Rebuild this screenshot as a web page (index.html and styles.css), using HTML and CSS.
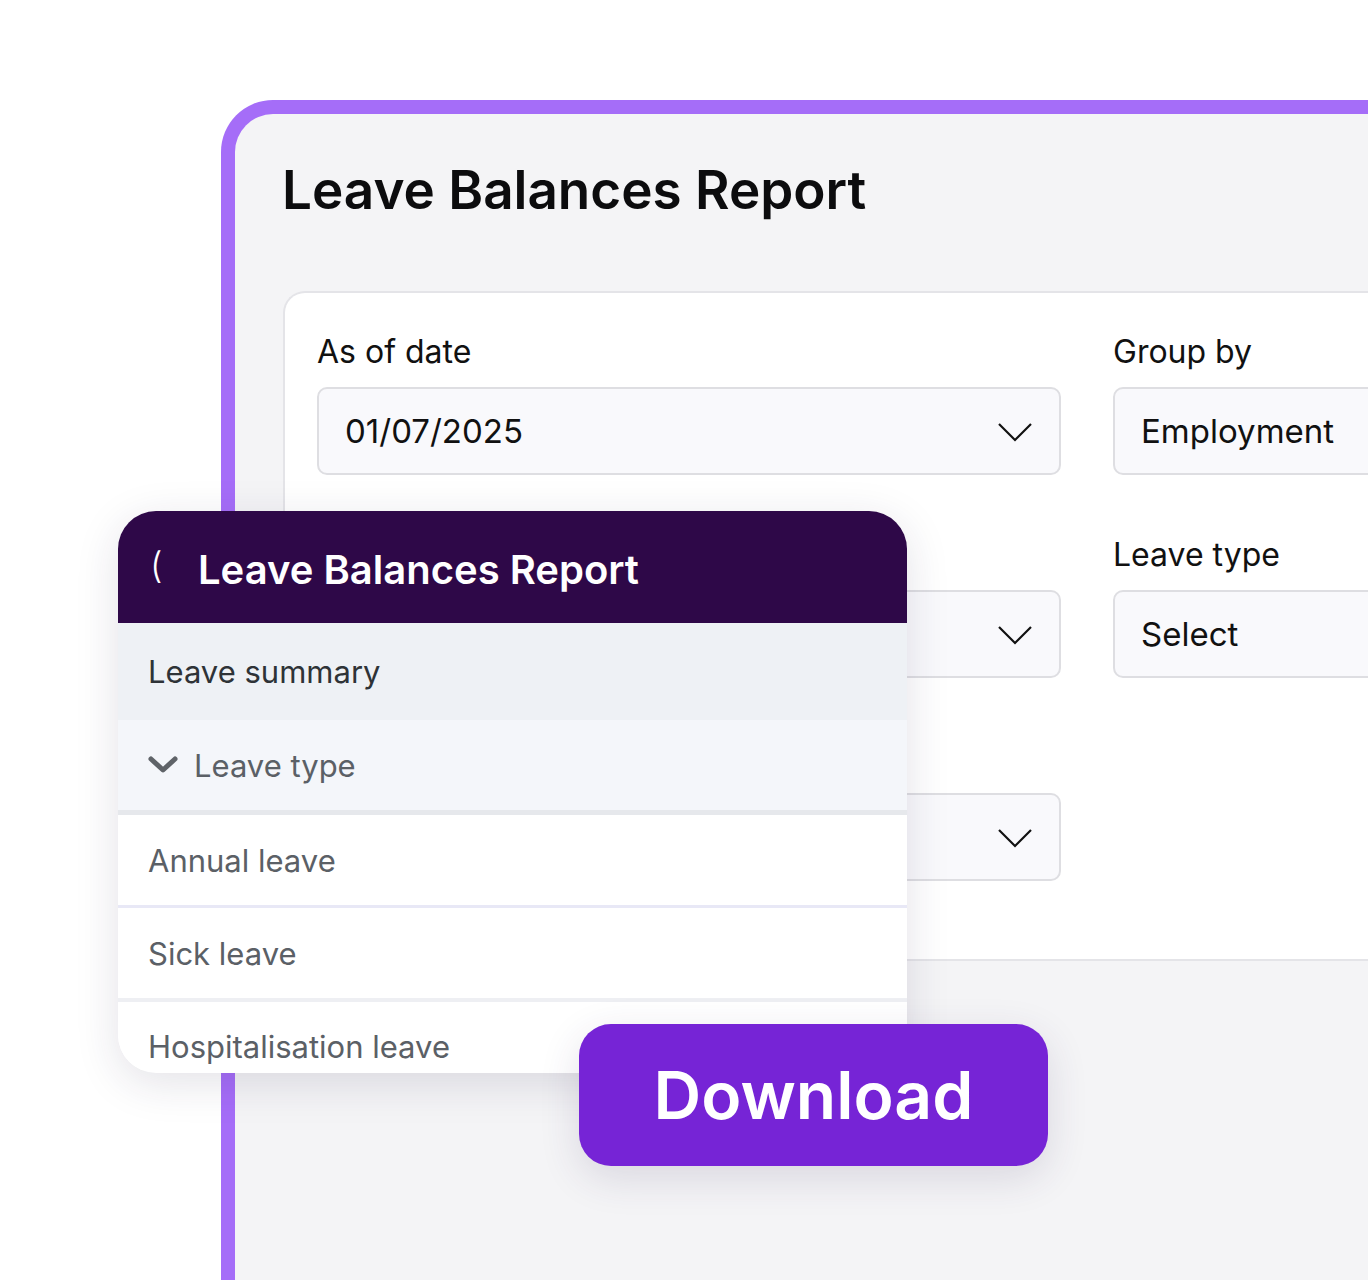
FILE: index.html
```html
<!DOCTYPE html>
<html lang="en">
<head>
  <meta charset="UTF-8" />
  <meta name="viewport" content="width=device-width, initial-scale=1.0"/>
  <title>Leave Balances Report</title>
  <link rel="stylesheet" href="styles.css">
</head>
<body>
  <div class="frame">
    <div class="screen">
      <h1 class="page-title">Leave Balances Report</h1>

      <div class="filter-card">
        <div class="field">
          <label>As of date</label>
          <div class="select">
            <span>01/07/2025</span>
            <svg class="caret" width="36" height="20" viewBox="0 0 36 20"><path d="M2 2 L18 18 L34 2" fill="none" stroke="#111" stroke-width="2.2"/></svg>
          </div>
        </div>
        <div class="field">
          <label>Group by</label>
          <div class="select"><span>Employment</span></div>
        </div>

        <div class="field">
          <label></label>
          <div class="select">
            <span></span>
            <svg class="caret" width="36" height="20" viewBox="0 0 36 20"><path d="M2 2 L18 18 L34 2" fill="none" stroke="#111" stroke-width="2.2"/></svg>
          </div>
        </div>
        <div class="field">
          <label>Leave type</label>
          <div class="select"><span>Select</span></div>
        </div>

        <div class="field">
          <label></label>
          <div class="select">
            <span></span>
            <svg class="caret" width="36" height="20" viewBox="0 0 36 20"><path d="M2 2 L18 18 L34 2" fill="none" stroke="#111" stroke-width="2.2"/></svg>
          </div>
        </div>
      </div>
    </div>
  </div>

  <!-- mobile menu floating over the report -->
  <div class="mobile-panel">
    <div class="panel-head">
      <span class="back">(</span>
      <span class="panel-title">Leave Balances Report</span>
    </div>
    <div class="row row-summary">Leave summary</div>
    <div class="row row-group">
      <svg width="30" height="20" viewBox="0 0 30 20"><path d="M3 4 L15 15 L27 4" fill="none" stroke="#5f6368" stroke-width="5" stroke-linecap="round" stroke-linejoin="round"/></svg>
      Leave type
    </div>
    <div class="row row-item">Annual leave</div>
    <div class="row row-item sep-lav">Sick leave</div>
    <div class="row row-item row-last">Hospitalisation leave</div>
  </div>

  <button class="download-btn">Download</button>
</body>
</html>
```

FILE: styles.css
```css
body {
  margin: 0;
  background: #fff;
  font-family: Inter, "Noto Sans", sans-serif;
  width: 1368px;
  height: 1280px;
  overflow: hidden;
  position: relative;
}

.frame {
  margin: 100px 0 0 221px;
  width: 1147px;
  height: 1180px;
  background: #a56df8;
  border-radius: 52px 0 0 0;
  padding: 14px 0 0 14px;
  box-sizing: border-box;
}

.screen {
  background: #f4f4f6;
  height: 100%;
  border-radius: 38px 0 0 0;
  padding: 44px 0 0 47px;
  box-sizing: border-box;
  overflow: hidden;
}

.page-title {
  margin: 0 0 69px;
  font-size: 53px;
  font-weight: 600;
  color: #0c0c0e;
  line-height: 64px;
  white-space: nowrap;
}

.filter-card {
  margin-left: 1px;
  width: 1100px;
  background: #fff;
  border: 2px solid #e4e4e8;
  border-right: none;
  border-radius: 22px 0 0 22px;
  padding: 39px 0 78px 32px;
  box-sizing: border-box;
  display: grid;
  grid-template-columns: 744px 400px;
  column-gap: 52px;
  row-gap: 60px;
}

.field label {
  display: block;
  height: 40px;
  font-size: 32px;
  line-height: 40px;
  color: #111;
  margin-bottom: 15px;
}

.select {
  height: 88px;
  box-sizing: border-box;
  border: 2px solid #dedee2;
  border-radius: 10px;
  background: #f9f9fc;
  display: flex;
  align-items: center;
  justify-content: space-between;
  padding: 0 26px 0 26px;
  font-size: 33px;
  color: #111;
}

.caret {
  margin-top: 2px;
}

.mobile-panel {
  position: absolute;
  left: 118px;
  top: 511px;
  width: 789px;
  height: 562px;
  background: #fff;
  border-radius: 38px;
  overflow: hidden;
  box-shadow: 0 10px 44px rgba(40, 30, 70, 0.13);
}

.panel-head {
  height: 112px;
  background: #2e0848;
  display: flex;
  align-items: center;
  padding-left: 32px;
  color: #fff;
}

.back {
  font-size: 36px;
  font-weight: 300;
  width: 48px;
  margin-top: -4px;
}

.panel-title {
  font-size: 40px;
  font-weight: 600;
  margin-top: 4px;
}

.row {
  display: flex;
  align-items: center;
  padding-left: 30px;
  font-size: 31px;
  color: #5b6066;
  box-sizing: border-box;
}

.row-summary {
  height: 97px;
  background: #eef1f5;
  color: #2e3337;
}

.row-group {
  height: 95px;
  background: #f4f6fa;
  border-bottom: 5px solid #e6e8ec;
  gap: 16px;
}

.row-item {
  height: 90px;
  background: #fff;
}

.sep-lav {
  border-top: 3px solid #e8e8f6;
  height: 93px;
}

.row-last {
  border-top: 4px solid #eeeff3;
  height: 72px;
  padding-top: 20px;
}

.download-btn {
  position: absolute;
  left: 579px;
  top: 1024px;
  width: 469px;
  height: 142px;
  border: none;
  border-radius: 32px;
  background: #7624d6;
  color: #fff;
  font-family: Inter, "Noto Sans", sans-serif;
  font-size: 66px;
  font-weight: 600;
  box-shadow: 0 12px 40px rgba(60, 40, 90, 0.14);
}
```
